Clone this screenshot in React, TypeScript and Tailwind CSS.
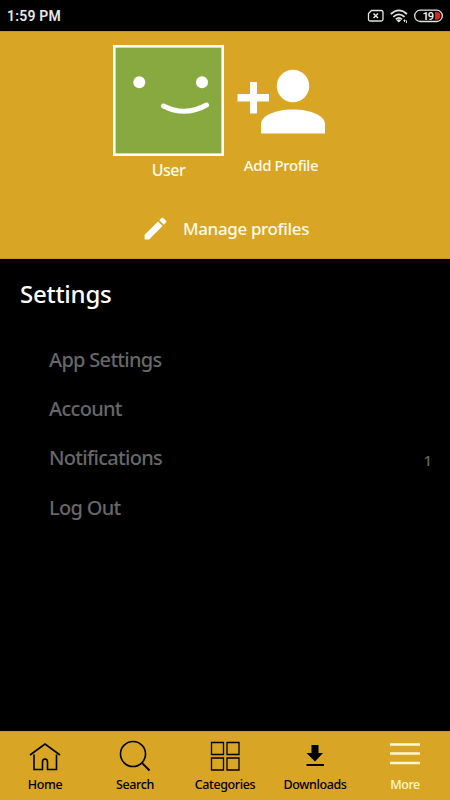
import { ReactNode } from "react";
import { MdEdit } from "react-icons/md";

const settings = [
  { label: "App Settings" },
  { label: "Account" },
  { label: "Notifications", count: 1 },
  { label: "Log Out" },
];

function StatusBar() {
  return (
    <div className="flex h-[31px] shrink-0 items-center justify-between pl-[7px] pr-[7px] pt-px">
      <span className="font-['Roboto',sans-serif] text-[14px] font-semibold leading-none tracking-[0.2px] text-[#e8e8e8]">1:59 PM</span>
      <svg width="77" height="18" viewBox="366 7 77 18" fill="none" stroke="#e4e4e4">
        <path d="M371.5 10.5H381Q383 10.5 383 12.500V19.500Q383 21 381 21H370Q368.500 21 368.500 19.500V13.500Z" strokeWidth="1.300" />
        <path d="M373.500 13.500L378 18M378 13.500L373.500 18" strokeWidth="1.500" />
        <path d="M390.800 14Q398.800 6.800 407 14M393.300 16.800Q398.800 11.800 404.500 16.800M395.800 19.300Q398.800 16.600 402 19.300" strokeWidth="1.700" />
        <path d="M396.500 20.200Q398.800 18.400 401.200 20.200L398.800 22.600Z" fill="#e4e4e4" stroke="none" />
        <path d="M404.500 19.500V22M406.500 20.500V23M403.500 20.500H405.500" strokeWidth="1" />
        <rect x="414.700" y="10.200" width="27.600" height="11.300" rx="5.600" strokeWidth="1.300" />
        <path d="M435 12H437.500Q440.500 12.800 440.500 15.800T437.500 19.700H435Z" fill="#d3261e" stroke="none" />
        <text x="422.500" y="19.700" fill="#f2f2f2" stroke="none" fontSize="11" fontWeight="600" fontFamily="Roboto, sans-serif" textLength="11.500">19</text>
      </svg>
    </div>
  );
}

function Profiles() {
  return (
    <section className="h-[228px] shrink-0 border-y border-y-[#c5942b] bg-[#d8a524] font-medium text-[#fffbea]">
      <div className="flex pl-[113px] pt-[13px]">
        <div className="w-[111px]">
          <svg width="111" height="111" viewBox="0 0 111 111" fill="white">
            <rect x="1.300" y="1.300" width="108.400" height="108.400" fill="#87a940" stroke="white" strokeWidth="2.600" />
            <circle cx="26.300" cy="37.300" r="6" />
            <circle cx="89" cy="37.300" r="6" />
            <path d="M50.500 61Q72 72 93.500 60" fill="none" stroke="white" strokeWidth="5" strokeLinecap="round" />
          </svg>
          <div className="mt-[3px] text-center text-[16px] leading-[22px] tracking-[-0.5px]">User</div>
        </div>
        <div className="ml-[7px] w-[100px] pt-6">
          <svg className="ml-[6px]" width="90" height="66" viewBox="237 69 90 66" fill="white">
            <path d="M250 82H257V94H269V101.500H257V113.500H250V101.500H237.500V94H250Z" />
            <circle cx="293" cy="86" r="16.200" />
            <path d="M261 133.500V124C261 115.500 276 109.500 293 109.500S325 115.500 325 124V133.500Z" />
          </svg>
          <div className="mt-[20px] text-center text-[15px] leading-[20px] tracking-[-0.4px]">Add Profile</div>
        </div>
      </div>
      <div className="mt-[33px] flex items-center pl-[141px]">
        <MdEdit size={29} color="white" />
        <span className="ml-[13px] text-[17px] leading-6 tracking-[-0.36px]">Manage profiles</span>
      </div>
    </section>
  );
}

function NavItem({ label, active, children }: { label: string; active?: boolean; children: ReactNode }) {
  return (
    <div className={active ? "flex w-[90px] flex-col items-center text-[#fff8d0]" : "flex w-[90px] flex-col items-center text-black"}>
      <svg className="mt-[7px]" width="34" height="34" viewBox="0 0 34 34" fill="none" stroke="currentColor" strokeWidth="1.600">
        {children}
      </svg>
      <span className="mt-[3px] text-[12.500px] font-medium leading-[17px] tracking-[-0.4px]">{label}</span>
    </div>
  );
}

export default function App() {
  return (
    <div className="flex h-[800px] w-[450px] flex-col overflow-hidden bg-black font-['Noto_Sans',sans-serif]">
      <StatusBar />
      <Profiles />
      <main className="flex-1">
        <h1 className="pl-5 pt-[19px] text-[24px] font-medium leading-8 tracking-[-0.25px] text-white">Settings</h1>
        <ul className="pt-[25px] font-medium text-[#676767]">
          {settings.map((item) => (
            <li key={item.label} className="flex h-[49.400px] items-center justify-between pl-[49px] pr-[18px]">
              <span className="text-[20px] tracking-[-0.7px]">{item.label}</span>
              {item.count && <span className="pt-[3px] text-[15px]">{item.count}</span>}
            </li>
          ))}
        </ul>
      </main>
      <nav className="flex h-[69px] shrink-0 border-t border-[#c5942b] bg-[#d8a524]">
        <NavItem label="Home">
          <path d="M2 16L17 5L32 16M6 15.500V30.500H14.500V23Q14.500 20 17 20T19.500 23V30.500H28.500V15.500" />
        </NavItem>
        <NavItem label="Search">
          <circle cx="15" cy="15" r="12.500" />
          <path d="M23.700 23.700L31.500 31.500" strokeWidth="1.900" />
        </NavItem>
        <NavItem label="Categories">
          <path d="M3.500 3.500H15.500V15.500H3.500ZM19 3.500H31V15.500H19ZM3.500 19H15.500V31H3.500ZM19 19H31V31H19Z" strokeWidth="1.300" />
        </NavItem>
        <NavItem label="Downloads">
          <path d="M13.500 6H20.500V14H25L17 22.500L8.500 14H13.500ZM8.500 25H26V27H8.500Z" fill="currentColor" stroke="none" />
        </NavItem>
        <NavItem label="More" active>
          <path d="M2 5.500H32M2 14.500H32M2 24H32" strokeWidth="2.500" />
        </NavItem>
      </nav>
    </div>
  );
}
